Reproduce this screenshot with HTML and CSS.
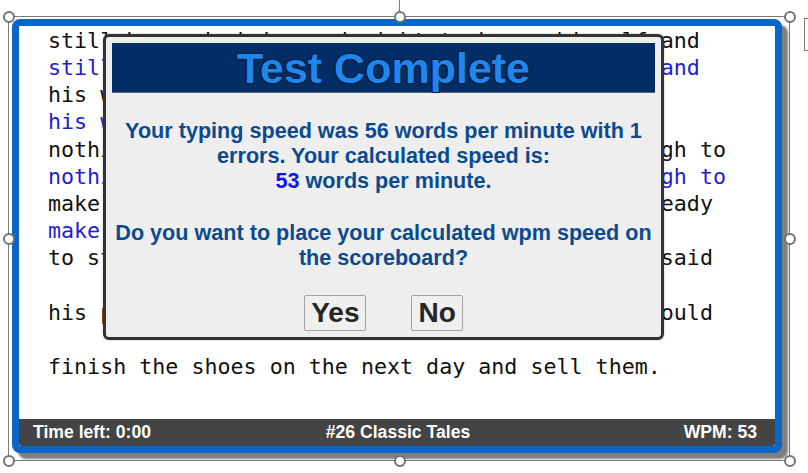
FILE: index.html
```html
<!DOCTYPE html>
<html>
<head>
<meta charset="utf-8">
<link rel="stylesheet" href="styles.css">
</head>
<body>
<div class="stage">
  <div class="card">
    <div class="passage">
      <div class="ln">still he worked day and night to house himself and</div>
      <div class="ln typed">still he worked day and night to house himself and</div>
      <div class="ln">his wife, but however hard he tried he had</div>
      <div class="ln typed">his wife, but however hard he tried he had</div>
      <div class="ln">nothing he did ever seemed to bring him in enough to</div>
      <div class="ln typed">nothing he did ever seemed to bring him in enough to</div>
      <div class="ln">make a living. One evening he had his leather ready</div>
      <div class="ln typed">make a living. One evening he</div>
      <div class="ln">to start cutting next morning, and when he had said</div>
      <div class="ln"> </div>
      <div class="ln">his prayers, he went to bed, thinking that he would</div>
      <div class="ln"> </div>
      <div class="ln">finish the shoes on the next day and sell them.</div>
    </div>
    <div class="status">
      <span class="st-left">Time left: 0:00</span>
      <span class="st-mid">#26 Classic Tales</span>
      <span class="st-right">WPM: 53</span>
    </div>

    <div class="dialog">
      <div class="dlg-head">Test Complete</div>
      <p class="dlg-p first">Your typing speed was 56 words per minute with 1 errors. Your calculated speed is:<br><span class="calc">53</span> words per minute.</p>
      <p class="dlg-p second">Do you want to place your calculated wpm speed on the scoreboard?</p>
      <div class="dlg-btns">
        <button class="btn">Yes</button>
        <button class="btn">No</button>
      </div>
    </div>
  </div>

  <div class="sel-frame"></div>
  <div class="rot-line"></div>
  <div class="handle h-tl"></div>
  <div class="handle h-tm"></div>
  <div class="handle h-tr"></div>
  <div class="handle h-ml"></div>
  <div class="handle h-mr"></div>
  <div class="handle h-bl"></div>
  <div class="handle h-bm"></div>
  <div class="handle h-br"></div>
  <div class="layout-btn"></div>
</div>
</body>
</html>
```
FILE: styles.css
```css
html, body {
  margin: 0;
  padding: 0;
  background: #ffffff;
  overflow: hidden;
}

.stage {
  position: relative;
  width: 808px;
  height: 473px;
  box-sizing: border-box;
  padding: 19px 0 0 12px;
  overflow: hidden;
}

.card {
  position: relative;
  width: 770px;
  height: 434px;
  box-sizing: border-box;
  border: 7px solid #0766c8;
  border-radius: 8px;
  background: #ffffff;
  box-shadow: 6px 6px 2px rgba(0, 0, 0, 0.5);
  display: flex;
  flex-direction: column;
  z-index: 1;
}

.passage {
  flex: 1;
  padding: 1px 0 0 29px;
  font-family: "DejaVu Sans Mono", monospace;
  font-size: 21.66px;
  line-height: 27.17px;
  color: #111111;
  overflow: hidden;
}

.ln {
  white-space: pre;
  height: 27.17px;
}

.ln.typed {
  color: #1d1dd4;
}

.status {
  height: 27px;
  background: #444444;
  color: #ffffff;
  font-family: "Liberation Sans", Arial, sans-serif;
  font-weight: bold;
  font-size: 17.6px;
  display: grid;
  grid-template-columns: 1fr auto 1fr;
  align-items: center;
  padding: 0 18px 0 14px;
  border-radius: 0 0 2px 2px;
}

.st-mid {
  margin-left: 6px;
}

.st-right {
  justify-self: end;
}

.dialog {
  position: absolute;
  left: 84px;
  top: 8px;
  width: 561px;
  height: 306px;
  box-sizing: border-box;
  border: 3px solid #333333;
  border-radius: 6px;
  background: #eeeeee;
  padding: 6px;
  font-family: "Liberation Sans", Arial, sans-serif;
  box-shadow: 0 0 2px rgba(0, 0, 0, 0.3);
}

.dlg-head {
  height: 50px;
  background: #032d66;
  color: #1d87ef;
  font-weight: bold;
  font-size: 43px;
  line-height: 50px;
  text-align: center;
  box-sizing: border-box;
  border-bottom: 1px solid #54677f;
  text-shadow:
    1px 0 0 #0b1d36, -1px 0 0 #0b1d36, 0 1px 0 #0b1d36, 0 -1px 0 #0b1d36,
    1px 1px 0 #0b1d36, -1px -1px 0 #0b1d36, 1px -1px 0 #0b1d36, -1px 1px 0 #0b1d36;
}

.dlg-p {
  margin: 0;
  font-weight: bold;
  font-size: 21.6px;
  line-height: 25px;
  color: #0c4a8e;
  text-align: center;
}

.dlg-p.first {
  margin-top: 25px;
}

.dlg-p.second {
  margin-top: 27px;
}

.calc {
  color: #1414ee;
}

.dlg-btns {
  margin-top: 25px;
  display: flex;
  justify-content: center;
  gap: 45px;
}

.btn {
  margin: 0;
  height: 36px;
  box-sizing: border-box;
  padding: 0 6px;
  border: 1px solid #a3a3a3;
  border-radius: 2px;
  background: #efefef;
  color: #262626;
  font-family: "Liberation Sans", Arial, sans-serif;
  font-weight: bold;
  font-size: 28px;
  line-height: 34px;
}

.sel-frame {
  position: absolute;
  left: 8px;
  top: 16px;
  width: 782px;
  height: 445px;
  box-sizing: border-box;
  border: 1px solid #7a7a7a;
  z-index: 0;
}

.rot-line {
  position: absolute;
  left: 399px;
  top: 0;
  width: 1px;
  height: 12px;
  background: #7a7a7a;
  z-index: 2;
}

.handle {
  position: absolute;
  width: 12px;
  height: 12px;
  margin: -6px 0 0 -6px;
  box-sizing: border-box;
  border: 2px solid #737373;
  border-radius: 50%;
  background: #ffffff;
  z-index: 3;
}

.h-tl { left: 8.5px; top: 16.5px; }
.h-tm { left: 399.5px; top: 16.5px; }
.h-tr { left: 790px; top: 16.5px; }
.h-ml { left: 8.5px; top: 239px; }
.h-mr { left: 790px; top: 239px; }
.h-bl { left: 8.5px; top: 461px; }
.h-bm { left: 399.5px; top: 461px; }
.h-br { left: 790px; top: 461px; }

.layout-btn {
  position: absolute;
  left: 804px;
  top: 18px;
  width: 20px;
  height: 33px;
  box-sizing: border-box;
  border: 1px solid #7a7a7a;
  background: #ffffff;
}
```
